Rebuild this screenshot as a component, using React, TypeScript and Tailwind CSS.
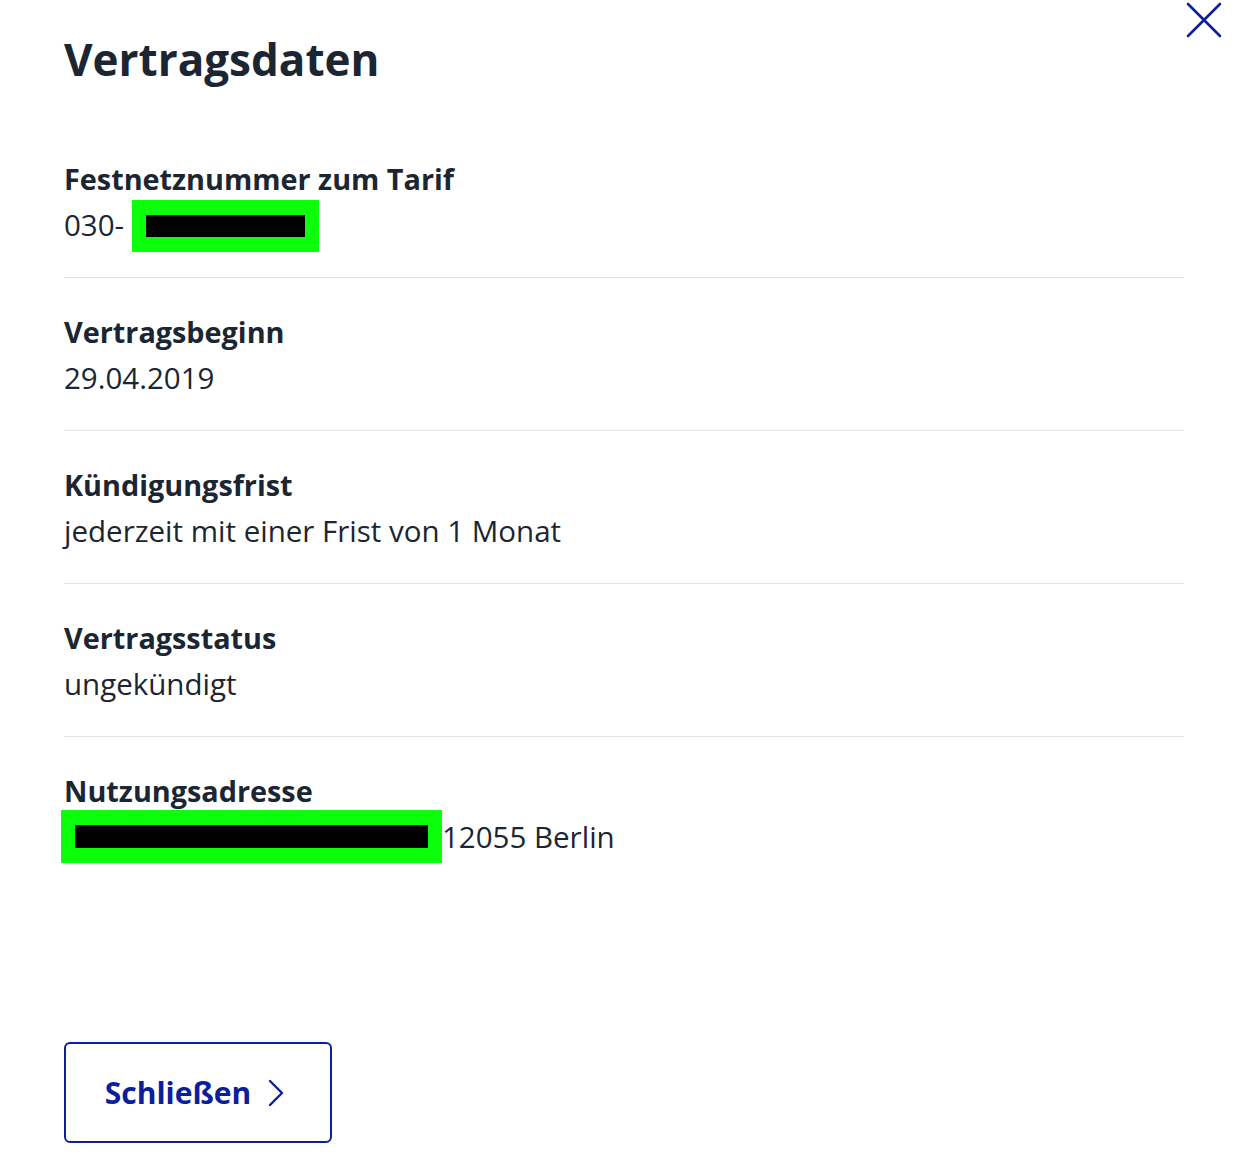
import React from "react";

const rows: { label: string; value: React.ReactNode }[] = [
  {
    label: "Festnetznummer zum Tarif",
    value: (
      <>
        030-
        <span className="inline-flex items-center align-middle -mt-[12px] -mb-[8px] ml-[8px] h-[52px] w-[187px] bg-[#0bff0b] px-[14px]">
          <span className="block h-[22px] w-full bg-black" />
        </span>
      </>
    ),
  },
  { label: "Vertragsbeginn", value: "29.04.2019" },
  { label: "Kündigungsfrist", value: "jederzeit mit einer Frist von 1 Monat" },
  { label: "Vertragsstatus", value: "ungekündigt" },
  {
    label: "Nutzungsadresse",
    value: (
      <>
        <span className="inline-flex items-center align-middle -mt-[14px] -mb-[6px] -ml-[3px] h-[53px] w-[381px] bg-[#0bff0b] px-[14px]">
          <span className="block h-[23px] w-full bg-black" />
        </span>
        12055 Berlin
      </>
    ),
  },
];

export default function App() {
  return (
    <div
      className="relative w-[1252px] h-[1174px] bg-white text-[#1b2632] overflow-hidden"
      style={{ fontFamily: "'Open Sans', sans-serif" }}
    >
      <button className="absolute right-[30px] top-[2px] w-[36px] h-[36px] flex items-center justify-center text-[#0b1f9c]">
        <svg width="36" height="36" viewBox="0 0 36 36" fill="none" stroke="currentColor" strokeWidth="2.6" strokeLinecap="round">
          <path d="M2 2 L34 34 M34 2 L2 34" />
        </svg>
      </button>
      <div className="flex flex-col items-start pl-[64px] pr-[68px] pt-[29px]">
        <h1 className="text-[44px] leading-[60px] font-bold mb-[36px]">Vertragsdaten</h1>
        <div className="flex flex-col self-stretch">
          {rows.map((r, i) => (
            <div key={r.label} className={`flex flex-col pt-[31px] pb-[29px] ${i < rows.length - 1 ? "border-b border-[#e2e2e2]" : ""}`}>
              <div className="text-[28.8px] leading-[46px] font-bold">{r.label}</div>
              <div className="text-[29.5px] leading-[46px] font-normal whitespace-nowrap">{r.value}</div>
            </div>
          ))}
        </div>
        <button className="mt-[153px] w-[268px] h-[101px] border-2 border-[#0b1f9c] rounded-[6px] flex items-center justify-center gap-[16px] pr-[6px] text-[#0b1f9c]">
          <span className="text-[30px] font-bold">Schließen</span>
          <svg width="18" height="30" viewBox="0 0 18 30" fill="none" stroke="currentColor" strokeWidth="2.4" strokeLinecap="round" strokeLinejoin="round">
            <path d="M3 3 L15 15 L3 27" />
          </svg>
        </button>
      </div>
    </div>
  );
}
